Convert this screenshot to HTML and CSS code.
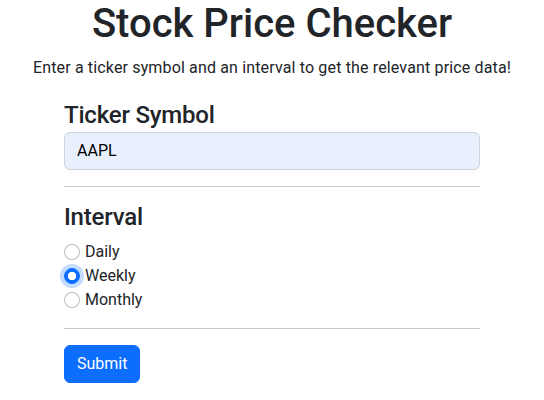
FILE: index.html
```html
<!DOCTYPE html>
<html lang="en">
<head>
<meta charset="utf-8">
<title>Stock Price Checker</title>
<link rel="stylesheet" href="styles.css">
</head>
<body>
<main class="page">
  <h1 class="title">Stock Price Checker</h1>
  <p class="lead">Enter a ticker symbol and an interval to get the relevant price data!</p>
  <form class="form">
    <label class="section-label" for="ticker">Ticker Symbol</label>
    <input class="text-input" id="ticker" type="text" value="AAPL">
    <hr class="divider">
    <div class="section-label interval-label">Interval</div>
    <div class="radios">
      <label class="radio-row"><input class="radio" type="radio" name="interval" value="daily"> Daily</label>
      <label class="radio-row"><input class="radio radio-focus" type="radio" name="interval" value="weekly" checked> Weekly</label>
      <label class="radio-row"><input class="radio" type="radio" name="interval" value="monthly"> Monthly</label>
    </div>
    <hr class="divider">
    <div class="actions">
      <button class="btn-primary" type="button">Submit</button>
    </div>
  </form>
</main>
</body>
</html>
```
FILE: styles.css
```css
* { box-sizing: border-box; }
html, body { margin: 0; padding: 0; background: #fff; }
body {
  font-family: Roboto, Inter, "Liberation Sans", sans-serif;
  font-size: 16px;
  line-height: 1.5;
  color: #212529;
}
.page {
  display: flex;
  flex-direction: column;
  align-items: center;
}
.title {
  margin: 0 0 8px;
  font-size: 40px;
  font-weight: 500;
  line-height: 1.2;
  text-align: center;
}
.lead {
  margin: 0;
  text-align: center;
  letter-spacing: 0.15px;
}
.form {
  width: 416px;
  display: flex;
  flex-direction: column;
  align-items: flex-start;
  padding-top: 21px;
}
.section-label {
  display: block;
  font-size: 24px;
  font-weight: 500;
  line-height: 1.2;
  letter-spacing: -0.2px;
  margin-bottom: 2px;
}
.interval-label { margin-bottom: 8px; }
.text-input {
  width: 100%;
  height: 38px;
  padding: 6px 12px;
  font: inherit;
  font-size: 16px;
  line-height: 1.5;
  color: #000;
  background: #e8f0fe;
  border: 1px solid #ced4da;
  border-radius: 6px;
  outline: none;
}
.divider {
  width: 100%;
  margin: 16px 0;
  border: 0;
  border-top: 1px solid #c8c9ca;
}
.radios { display: flex; flex-direction: column; }
.radio-row { display: block; line-height: 24px; }
.radio {
  -webkit-appearance: none;
  appearance: none;
  width: 16px;
  height: 16px;
  margin: 4px 1px 0 0;
  vertical-align: top;
  border: 1px solid rgba(0,0,0,0.25);
  border-radius: 50%;
  background: #fff;
}
.radio:checked {
  background: #0d6efd radial-gradient(circle, #fff 0 4px, transparent 4.5px);
  border-color: #0d6efd;
}
.radio-focus {
  border-color: #86b7fe;
  box-shadow: 0 0 0 4px rgba(13,110,253,0.25);
}
.radio-focus:checked { border-color: #0d6efd; }
.btn-primary {
  font: inherit;
  font-size: 16px;
  line-height: 1.5;
  padding: 6px 12px;
  color: #fff;
  background: #0d6efd;
  border: 1px solid #0d6efd;
  border-radius: 6px;
}
```
